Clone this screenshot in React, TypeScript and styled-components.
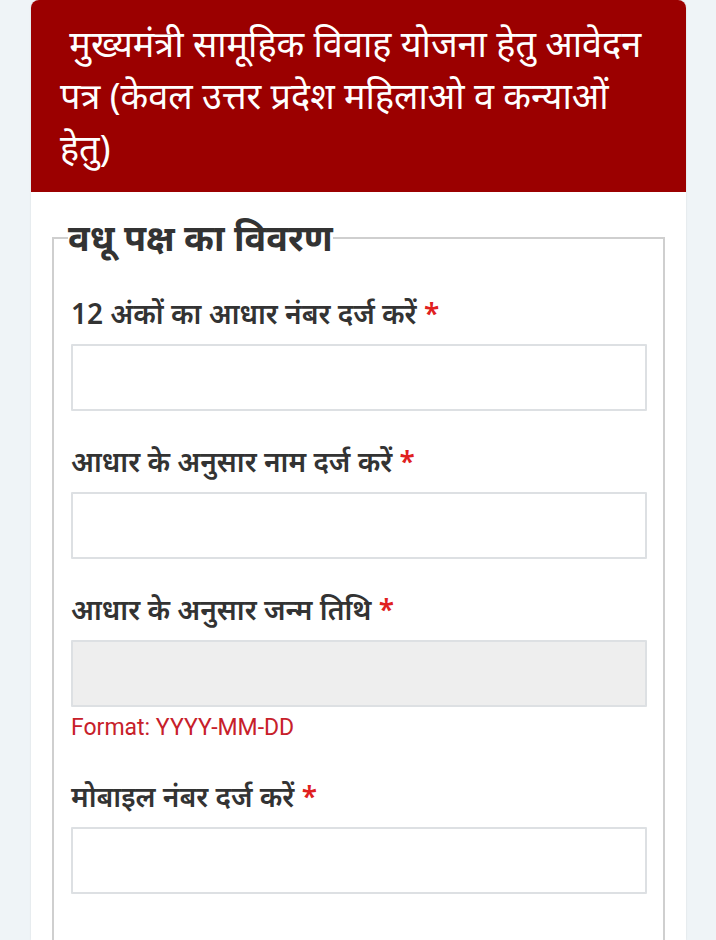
import styled, { createGlobalStyle } from 'styled-components'

const GlobalStyle = createGlobalStyle`
  html, body {
    margin: 0;
    padding: 0;
    background: #eff4f7;
  }
  body {
    font-family: "Noto Sans", Roboto, "Liberation Sans", sans-serif;
  }
`

interface FieldProps {
  label: string,
  disabled?: boolean,
  hint?: string
}

const Field = ({label, disabled, hint}: FieldProps) => {
  return <FieldWrap>
    <Label>{label} <Required>*</Required></Label>
    <Input type="text" disabled={disabled} $disabled={disabled} />
    {hint && <Hint>{hint}</Hint>}
  </FieldWrap>
}

const App = () => {
  return <>
    <GlobalStyle />
    <Page>
      <Card>
        <Header>
          <Title>&nbsp;मुख्यमंत्री सामूहिक विवाह योजना हेतु आवेदन पत्र (केवल उत्तर प्रदेश महिलाओ व कन्याओं हेतु)</Title>
        </Header>
        <Body>
          <Fieldset>
            <Legend>वधू पक्ष का विवरण</Legend>
            <Field label="12 अंकों का आधार नंबर दर्ज करें" />
            <Field label="आधार के अनुसार नाम दर्ज करें" />
            <Field label="आधार के अनुसार जन्म तिथि" disabled hint="Format: YYYY-MM-DD" />
            <Field label="मोबाइल नंबर दर्ज करें" />
          </Fieldset>
        </Body>
      </Card>
    </Page>
  </>
}

export default App

const Page = styled.div`
  height: 940px;
  overflow: hidden;
  padding: 0 30px 0 31px;
  box-sizing: border-box;
`

const Card = styled.div`
  display: flex;
  flex-direction: column;
  height: 100%;
  background: #fff;
  border-radius: 8px 8px 0 0;
  overflow: hidden;
  box-shadow: 0 0 2px rgba(0, 0, 0, 0.12);
`

const Header = styled.header`
  background: #9b0000;
  padding: 18px 36px 18px 29px;
`

const Title = styled.h1`
  margin: 0;
  color: #fff;
  font-size: 36px;
  font-weight: 400;
  line-height: 52px;
`

const Body = styled.div`
  flex: 1;
  display: flex;
  flex-direction: column;
  padding: 26px 21px 0;
`

const Fieldset = styled.fieldset`
  flex: 1;
  margin: 0;
  border: 2px solid #cfcfcf;
  border-bottom: none;
  padding: 35px 16px 0 17px;
  min-width: 0;
`

const Legend = styled.legend`
  padding: 0;
  margin-left: -3px;
  font-size: 36px;
  font-weight: 700;
  color: #333;
  line-height: 40px;
`

const FieldWrap = styled.div`
  display: flex;
  flex-direction: column;

  &:not(:last-of-type) {
    margin-bottom: 30px;
  }
`

const Label = styled.label`
  font-size: 28px;
  font-weight: 600;
  color: #333;
  line-height: 40px;
  margin-bottom: 11px;
`

const Required = styled.span`
  color: #e02020;
`

const Input = styled.input<{ $disabled?: boolean }>`
  box-sizing: border-box;
  width: 100%;
  height: 67px;
  margin: 0;
  border: 2px solid #dde0e3;
  border-radius: 1px;
  background: ${p => p.$disabled ? '#eeeeee' : '#fff'};
  font-size: 22px;
  outline: none;
`

const Hint = styled.div`
  margin-top: 7px;
  margin-bottom: 4px;
  font-size: 23px;
  line-height: 28px;
  color: #c7202a;
  font-family: Roboto, "Noto Sans", sans-serif;
`
